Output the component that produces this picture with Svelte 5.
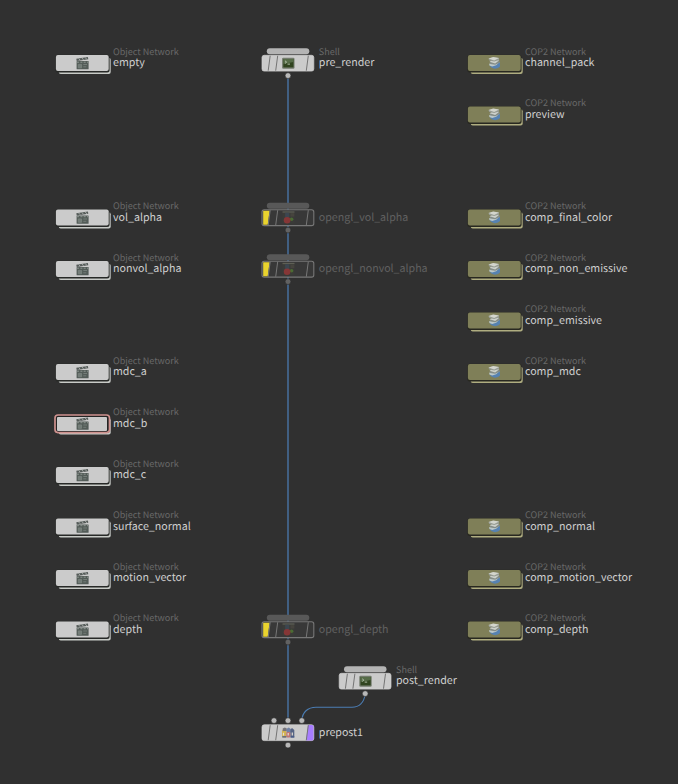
<script>
  const objects = [
    ['empty', 63], ['vol_alpha', 217.5], ['nonvol_alpha', 269], ['mdc_a', 372],
    ['mdc_b', 423.5, true], ['mdc_c', 475], ['surface_normal', 526.5],
    ['motion_vector', 578], ['depth', 629.5]
  ];
  const comps = [
    ['channel_pack', 63], ['preview', 114.5], ['comp_final_color', 217.5],
    ['comp_non_emissive', 269], ['comp_emissive', 320.5], ['comp_mdc', 372],
    ['comp_normal', 526.5], ['comp_motion_vector', 578], ['comp_depth', 629.5]
  ];
  const renders = [
    ['opengl_vol_alpha', 217.5], ['opengl_nonvol_alpha', 269], ['opengl_depth', 629.5]
  ];
</script>

{#snippet clapper()}
  <path d="M-6-4.3 5.6-6.2 6-3.8-5.6-2Z" fill="#555b59" />
  <path d="M-3.7-4.6-2-2.8M-.4-5.2 1.2-3.2M2.9-5.7 4.5-3.7" stroke="#a4aaa6" stroke-width="1" />
  <rect x="-5.7" y="-2" width="12" height="8.2" rx=".5" fill="#535c58" />
  <path d="M-5.2-.9H5.8" stroke="#8f9792" stroke-width="1" stroke-dasharray="2 1.3" />
  <path d="M-4 1.3H-.7V4.7H-4ZM1 1.4H4.7M1 3.7H4" fill="#727c77" stroke="#7c8580" stroke-width=".8" />
{/snippet}

{#snippet layers()}
  <path d="M-4.6 2.5 0-1 5.8-.5V3.6Q4 6-.3 5.6Q-3.5 4.8-4.6 2.5Z" fill="#5682b1" />
  <path d="M-5 .8 0-1 5.4-1 2 2.2-2 3.4-4.8 2.6Z" fill="#bcc8c9" />
  <path d="M-4.6-1 0-3.5 5.2-2.6V-.2L1 1.8-4 1Z" fill="#858d88" />
  <path d="M-4.6-1.2-1-3.2 5-2.8 1 .4Z" fill="#cdd1cb" />
  <path d="M-5.7-4.2-1-5.8 4.8-5V-3L0-1.4-5-2.4Z" fill="#979c94" />
  <path d="M-5.7-4.4-1-5.9 4.8-5 0-2.6Z" fill="#d3d5cd" />
{/snippet}

{#snippet terminal()}
  <rect x="-6.2" y="-5.4" width="12.4" height="11" rx="1.2" fill="#737b6d" />
  <rect x="-5" y="-4.1" width="10.2" height="8.4" fill="#30441f" />
  <path d="M-5-4.1H5.2V-1L-5 1Z" fill="#566c48" />
  <path d="M-3.3-2.3-1.7-1-3.3.3M-.8 1H1.7" fill="none" stroke="#c0ccb7" stroke-width=".9" />
{/snippet}

{#snippet opengl()}
  <rect x="-5.8" y="-6" width="12" height="12" fill="#3a3b38" />
  <path d="M-5.8-5.6H6.2" stroke="#5e5f55" stroke-width="1.3" />
  <rect x="-3.2" y="-4.9" width="4.2" height="5" fill="#3c4650" />
  <path d="M2.2-4.5H6V-1H2.2Z" fill="#46443e" />
  <circle cx="3.3" cy="1.7" r="1.8" fill="#4b6b34" />
  <circle cx="-1.2" cy="2.6" r="3.3" fill="#853636" />
{/snippet}

{#snippet people()}
  <rect x="-6.3" y="-2.5" width="4.5" height="7.3" rx="1" fill="#d1b252" />
  <path d="M-5.6-1.5V-4L-3.5-5.2-1.5-4V-1.5Z" fill="#77757a" />
  <path d="M-1.7-3.8.5-5.2 2.5-3.6V0H-1.7Z" fill="#7182a6" />
  <path d="M2-2.8 3.7-4.7 6-2.5V5H2Z" fill="#566484" />
  <rect x="-2" y="-.7" width="4" height="5.5" rx="1" fill="#bd7474" />
  <path d="M-4.8.2V3M-.1.3V3M4 0V3" stroke="#e3ddd5" stroke-width="1.2" />
  <path d="M-6 4.2H-2M2.5 4.2H6" stroke="#455988" stroke-width="1.2" />
{/snippet}

{#snippet label(name, kind, dim)}
  {#if kind}<text class="kind" x="30.8" y="-8.1">{kind}</text>{/if}
  <text class:dim class="name" x="30.8" y="3.4">{name}</text>
{/snippet}

{#snippet driver(x, y, name, kind, icon, dim, cap, flag)}
  <g transform="translate({x} {y})">
    {#if cap}<rect x="-21.2" y="-14.8" width="42.5" height="6" rx="3" fill={dim ? '#585858' : '#b4b4b4'} />{/if}
    <rect class="driver" class:off={dim} x="-26" y="-7.7" width="51.8" height="15.8" rx="2.2" />
    {#if dim}<path d="M-24.8-6.8H-18.4L-20.3 7.3H-24.8Z" fill="#e9d32f" />{/if}
    {#if flag}<path d="M20-7.5H24Q25.5-7.5 25.5-6V6.5Q25.5 8 24 8H18Z" fill="#a77dff" />{/if}
    <path d="M-17.8-7.3-19.8 7.7M-10.3-7.3-12.3 7.7M20.3-7.3 18.3 7.7" stroke={dim ? '#777' : '#747474'} stroke-width="1" />
    <g transform="translate(.3 .1)">{@render icon()}</g>
    <circle cx="0" cy="12.6" r="2.9" fill={dim ? '#626262' : '#b8b8b8'} stroke="#292929" stroke-width=".6" />
    {@render label(name, kind, dim)}
  </g>
{/snippet}

<svg class="network" width="678" height="784" viewBox="0 0 678 784">
  <rect width="678" height="784" fill="#303030" />
  <path class="wire" d="M288 75V721" />
  <path class="wire thin" d="M365.3 694C364 702 360 707.2 352 707.2H316C308 707.2 302 712 301.8 721" />

  {#each objects as [name, y, selected]}
    <g transform="translate(82.2 {y})">
      <rect x="-23.5" y="-5.3" width="52" height="16.2" rx="2" fill="#c8cbc7" />
      <rect x="-26.8" y="-8.3" width="54.2" height="17.8" rx="2.5" fill="#272927" />
      <rect x="-26.3" y="-7.9" width="52.8" height="16" rx="2" fill="#cbcbcb" />
      {#if selected}
        <rect x="-27.2" y="-8.5" width="54.5" height="17.6" rx="3" fill="#242424" stroke="#ce918e" stroke-width="1.7" />
        <rect x="-25.2" y="-6.5" width="50" height="14" rx="1" fill="#cbcbcb" />
      {/if}
      <g transform="translate(.1 .1)">{@render clapper()}</g>
      {@render label(name, 'Object Network')}
    </g>
  {/each}

  {#each comps as [name, y]}
    <g transform="translate(494.2 {y})">
      <rect x="-23.5" y="-5.3" width="52" height="16.2" rx="2" fill="#afad80" />
      <rect x="-26.8" y="-8.3" width="54.2" height="17.8" rx="2.5" fill="#282820" />
      <rect x="-26.3" y="-7.9" width="52.8" height="16" rx="2" fill="#7f7f58" />
      {@render layers()}
      {@render label(name, 'COP2 Network')}
    </g>
  {/each}

  {@render driver(288, 63, 'pre_render', 'Shell', terminal, false, true, false)}
  {#each renders as [name, y]}
    {@render driver(288, y, name, '', opengl, true, true, false)}
  {/each}
  {@render driver(365.2, 681, 'post_render', 'Shell', terminal, false, true, false)}
  {@render driver(288, 732.5, 'prepost1', '', people, false, false, true)}
  {#each [274, 288, 301.8] as x}
    <circle cx={x} cy="720.6" r="2.9" fill="#b8b8b8" stroke="#292929" stroke-width=".6" />
  {/each}
</svg>

<style>
  :global(body) { background: #303030; }
  .network { display: block; }
  text { font-family: "Noto Sans CJK SC", "Noto Sans", sans-serif; text-rendering: geometricPrecision; }
  .kind { font-size: 9.05px; fill: #686868; }
  .name { font-size: 10.65px; letter-spacing: 0; fill: #cfcfcf; }
  .name.dim { fill: #606060; }
  .driver { fill: #cbcbcb; stroke: #d3d3d3; stroke-width: .7; }
  .driver.off { fill: #383838; stroke: #777; stroke-width: 1.1; }
  .wire { fill: none; stroke: #466c98; stroke-width: 1.6; }
  .wire.thin { stroke: #4b7db4; stroke-width: 1.1; }
</style>
